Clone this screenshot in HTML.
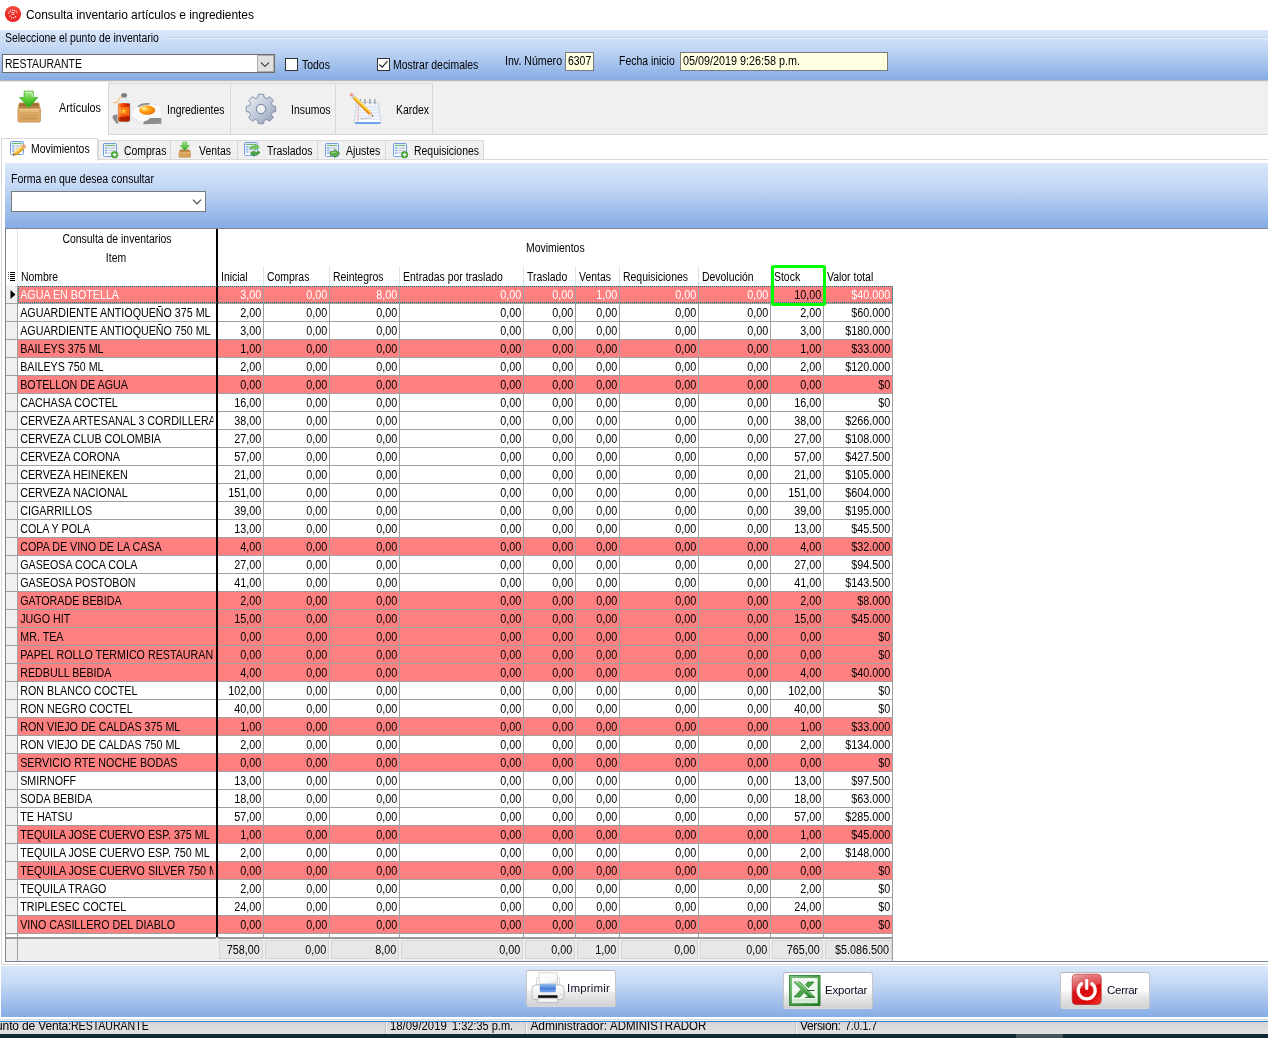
<!DOCTYPE html>
<html><head><meta charset="utf-8"><title>Consulta inventario</title>
<style>
*{box-sizing:border-box;margin:0;padding:0}
html,body{width:1268px;height:1038px;overflow:hidden;background:#fff}
body{position:relative;font-family:"Liberation Sans",sans-serif;font-size:12px;color:#000;line-height:14px}
.a{position:absolute}
.t{position:absolute;white-space:nowrap;transform:scaleX(.87);transform-origin:0 50%}
.g{position:absolute;white-space:nowrap}
.grad{background:linear-gradient(#d9e7fa,#c4d8f5 35%,#86ace4)}
.r{position:absolute;left:18px;width:875px;height:18px}
.red{background:#ff8080}
.c{position:absolute;top:0;height:17px;line-height:18px;text-align:right;white-space:nowrap;padding-right:2px;transform:scaleX(.9);transform-origin:100% 50%}
.n{position:absolute;top:0;left:0;width:219px;height:17px;line-height:18px;white-space:nowrap;overflow:hidden;padding-left:2.500px;transform:scaleX(.892);transform-origin:0 50%}
.sel{color:#fff}
.h{position:absolute;top:270px;height:14px;white-space:nowrap;transform:scaleX(.87);transform-origin:0 50%}
.vl{position:absolute;width:1px;background:#a0a0a0}
.hl{position:absolute;height:1px;background:#a0a0a0}
.tc{position:absolute;top:940px;height:19px;line-height:18px;text-align:right;background:#e6e8e8;border:1px solid #d4d6d6;padding-right:2px;white-space:nowrap}
.tc span{display:inline-block;transform:scaleX(.9);transform-origin:100% 50%}
</style></head><body><div id="all" style="position:absolute;left:0;top:0;width:1268px;height:1038px;will-change:transform">

<div class="a" style="left:0;top:0;width:1268px;height:30px;background:#fff"></div>
<svg class="a" style="left:4px;top:5px" width="18" height="18" viewBox="4 5 18 18"><defs><linearGradient id="tIc" x1="0" y1="0" x2="0" y2="1"><stop offset="0" stop-color="#f2503e"/><stop offset=".5" stop-color="#ee2c26"/><stop offset="1" stop-color="#ec2424"/></linearGradient></defs><circle cx="13" cy="14" r="8.100" fill="url(#tIc)"/><path d="M8.600 14.800 A4.600 4.600 0 0 1 17.400 14.800" fill="none" stroke="#fff" stroke-width="1.300" stroke-dasharray="1.100 1.150" transform="translate(0 -1.300)"/><path d="M11.700 12.600 h2.700 M11.700 14.300 h2.700" stroke="#ffe3e0" stroke-width="1"/><path d="M9.900 15.600 A3.200 3.200 0 0 0 16.100 15.600" fill="none" stroke="#fff" stroke-width="1.300" stroke-dasharray="1.100 1.100"/></svg>
<div class="g" style="left:26px;top:7px;font-size:12px;line-height:16px;letter-spacing:-0.05px">Consulta inventario artículos e ingredientes</div>
<div class="a grad" style="left:0;top:30px;width:1268px;height:50px"></div>
<div class="a" style="left:0;top:80px;width:1268px;height:1px;background:#b4bac6"></div>
<div class="a" style="left:0;top:81px;width:1268px;height:1px;background:#e4e4e4;z-index:1"></div>
<div class="a" style="left:0;top:37px;width:4px;height:1px;background:#c8cfd8"></div>
<div class="a" style="left:165px;top:37px;width:1103px;height:1px;background:#c8cfd8"></div>
<div class="a" style="left:165px;top:38px;width:1103px;height:1px;background:#e6eefb"></div>
<div class="t" style="left:5px;top:31px">Seleccione el punto de inventario</div>
<div class="a" style="left:2px;top:54px;width:273px;height:19px;background:#fff;border:1px solid #6d6d6d"></div>
<div class="t" style="left:5px;top:57px">RESTAURANTE</div>
<div class="a" style="left:257px;top:55px;width:17px;height:17px;background:#e1e1e1;border:1px solid #adadad"></div>
<svg class="a" style="left:260px;top:61px" width="11" height="7" viewBox="0 0 11 7"><path d="M1 1.500 L5 5.500 L9 1.500" fill="none" stroke="#444" stroke-width="1.1"/></svg>
<div class="a" style="left:285px;top:58px;width:13px;height:13px;background:#fff;border:1px solid #333"></div>
<div class="t" style="left:302px;top:58px">Todos</div>
<div class="a" style="left:377px;top:58px;width:13px;height:13px;background:#fff;border:1px solid #333"></div>
<svg class="a" style="left:378px;top:59px" width="11" height="11" viewBox="0 0 11 11"><path d="M1.5 5.5 L4.2 8.2 L9.5 2.2" fill="none" stroke="#222" stroke-width="1.2"/></svg>
<div class="t" style="left:393px;top:58px">Mostrar decimales</div>
<div class="t" style="left:505px;top:54px;transform:scaleX(.885)">Inv. Número</div>
<div class="a" style="left:565px;top:52px;width:29px;height:19px;background:#ffffe1;border:1px solid #7a7a7a"></div>
<div class="t" style="left:568px;top:54px">6307</div>
<div class="t" style="left:619px;top:54px">Fecha inicio</div>
<div class="a" style="left:680px;top:52px;width:208px;height:19px;background:#ffffe1;border:1px solid #7a7a7a"></div>
<div class="t" style="left:683px;top:54px;transform:scaleX(.9)">05/09/2019 9:26:58 p.m.</div>
<div class="a" style="left:0;top:81px;width:1268px;height:54px;background:#f0f0f0"></div>
<div class="a" style="left:0;top:134px;width:1268px;height:1px;background:#d9d9d9"></div>
<div class="a" style="left:0;top:81px;width:108px;height:54px;background:#fff"></div>
<div class="a" style="left:108px;top:83px;width:123px;height:52px;border:1px solid #d9d9d9"></div>
<div class="a" style="left:230px;top:83px;width:106px;height:52px;border:1px solid #d9d9d9"></div>
<div class="a" style="left:335px;top:83px;width:98px;height:52px;border:1px solid #d9d9d9"></div>
<div class="t" style="left:59px;top:101px;transform:scaleX(.9)">Artículos</div>
<div class="t" style="left:167px;top:103px">Ingredientes</div>
<div class="t" style="left:291px;top:103px">Insumos</div>
<div class="t" style="left:396px;top:103px">Kardex</div>
<svg class="a" style="left:0;top:81px" width="440" height="54" viewBox="0 81 440 54">
<defs>
<linearGradient id="gArrow" x1="0" y1="0" x2="0" y2="1"><stop offset="0" stop-color="#b7ee9f"/><stop offset=".45" stop-color="#5fd23c"/><stop offset="1" stop-color="#2aa514"/></linearGradient>
<linearGradient id="gBox" x1="0" y1="0" x2="0" y2="1"><stop offset="0" stop-color="#e9bb7b"/><stop offset="1" stop-color="#d39b52"/></linearGradient>
<linearGradient id="gBoxIn" x1="0" y1="0" x2="0" y2="1"><stop offset="0" stop-color="#8f5f2b"/><stop offset="1" stop-color="#c4934f"/></linearGradient>
<linearGradient id="gGear" x1="0" y1="0" x2="1" y2="1"><stop offset="0" stop-color="#eef1f6"/><stop offset=".5" stop-color="#c3ccdb"/><stop offset="1" stop-color="#8f9cb6"/></linearGradient>
<linearGradient id="gBot" x1="0" y1="0" x2="1" y2="0"><stop offset="0" stop-color="#ff7a1a"/><stop offset=".5" stop-color="#ea3a06"/><stop offset="1" stop-color="#b01c00"/></linearGradient>
<radialGradient id="gYolk" cx=".35" cy=".35" r=".8"><stop offset="0" stop-color="#ffe15a"/><stop offset=".45" stop-color="#ff9a10"/><stop offset="1" stop-color="#e86a00"/></radialGradient>
<linearGradient id="gPen" x1="0" y1="0" x2="1" y2="0"><stop offset="0" stop-color="#ffd23a"/><stop offset="1" stop-color="#f09a00"/></linearGradient>
<linearGradient id="gPad" x1="0" y1="0" x2="0" y2="1"><stop offset="0" stop-color="#f0f4fb"/><stop offset="1" stop-color="#ffffff"/></linearGradient>
</defs>
<!-- Articulos: box + arrow -->
<g>
<path d="M19.300 102.900 L38.900 102.900 L40.300 109 L17.900 109 Z" fill="url(#gBoxIn)" stroke="#d9aa68" stroke-width=".9" stroke-linejoin="round"/>
<rect x="18" y="108.600" width="22.300" height="13.400" rx="1" fill="#e4b06b" stroke="#bd8a4a" stroke-width=".9"/>
<rect x="19.800" y="110.600" width="18.700" height="9.800" fill="url(#gBox)"/>
<path d="M19.800 113h18.700M19.800 115.500h18.700M19.800 118h18.700" stroke="#c48e4b" stroke-width=".7"/>
<path d="M18.600 109.300h21" stroke="#f5d8a8" stroke-width=".9"/>
<path d="M24.200 91.200 h9 v6.400 h4.600 l-9.100 10 l-8.900 -10 h4.400 z" fill="url(#gArrow)" stroke="#3fb522" stroke-width=".9" stroke-linejoin="round"/>
<path d="M25.200 92.200 h7 v5" stroke="#e2fbd6" stroke-width=".9" fill="none" opacity=".85"/>
<path d="M28.700 106.200 l7.400 -8" stroke="#1f9410" stroke-width=".9" opacity=".6"/>
</g>
<!-- Ingredientes: bottle + egg -->
<g>
<path d="M113 115.500 l5 -1.500 l1 8 l-2 2.200 l-4.500 -6.200z" fill="#8a8a8a"/>
<path d="M131.600 114 Q132 108 139 105 Q146 102.600 158 105 Q161.300 106 161.300 110 L161.300 118.500 L150 118.500 Q146 123.600 140 123.600 Q132 123 131.600 114 Z" fill="#fbfbfb" stroke="#dcdcdc" stroke-width=".6"/>
<path d="M137.500 106.700 Q139.500 103.200 147 103 L150.300 103.300 L148 105.700 Q142 105 138.800 107.500 Z" fill="#8e8e8e"/>
<path d="M143.500 121.400 Q148 121 150 118 L161.300 118 L161.300 123.800 L143.500 124.200 Z" fill="#8d8d8d"/>
<path d="M134 117 q2 4.800 8 5.200" fill="none" stroke="#e2e2e2" stroke-width="1.200"/>
<path d="M133.500 112 l.5 .5 M136 119 l.5 .5 M139 116.500 l.5 .5 M141 120.500 l.5 .3 M137 113.500 l.5 .5" stroke="#d0d0d0" stroke-width=".7"/>
<ellipse cx="147.200" cy="110.200" rx="9" ry="5.500" fill="#ffffff" opacity=".9"/>
<ellipse cx="147.200" cy="110.200" rx="8.100" ry="4.600" fill="url(#gYolk)"/>
<ellipse cx="144" cy="108.600" rx="2.200" ry="1" fill="#fff4b8" opacity=".85"/>
<path d="M121.600 97 h5 v3.500 q3.700 1.200 3.900 4 v15.700 q0 2 -2 2.200 h-8.800 q-2 -.2 -2 -2.200 v-15.700 q.2 -2.800 3.900 -4z" fill="#e6f0f3" stroke="#c9d8dc" stroke-width=".7"/>
<path d="M118.200 103.600 q5.800 -1.400 11.600 0 v15.900 q0 1.800 -1.800 2 h-8 q-1.800 -.2 -1.800 -2z" fill="url(#gBot)"/>
<path d="M118.200 117 h11.600 v2.500 q0 1.800 -1.800 2 h-8 q-1.800 -.2 -1.800 -2z" fill="#a81c00" opacity=".8"/>
<rect x="118.800" y="106.800" width="10.400" height="8.800" fill="#f66c12"/>
<path d="M123.800 107.800 l1 2.100 l2.200 .2 l-1.700 1.500 l.5 2.200 l-2 -1.200 l-2 1.200 l.5 -2.200 l-1.700 -1.500 l2.200 -.2z" fill="#ffc12e"/>
<path d="M120 107.500 v6.500" stroke="#ffd9a0" stroke-width=".9"/>
<path d="M119.200 104.500 v15.500" stroke="#ff9a50" stroke-width=".7" opacity=".7"/>
<rect x="121.200" y="93.300" width="5.800" height="4.100" rx="1.800" fill="#7b7b7b"/>
<path d="M121.500 96.500 q-3.500 2 -3.500 5 q-1.500 1.600 -4.600 1.200" fill="none" stroke="#f2b13e" stroke-width="1"/>
</g>
<!-- Insumos: gear -->
<g transform="translate(261 109)">
<path id="gearp" fill="url(#gGear)" stroke="#7b88a6" stroke-width=".9" stroke-linejoin="round" d="M-2.600 -14.700 L2.600 -14.700 L3.300 -11.400 L5.700 -10.400 L8.600 -12.300 L12.300 -8.600 L10.400 -5.700 L11.400 -3.300 L14.700 -2.600 L14.700 2.600 L11.400 3.300 L10.400 5.700 L12.300 8.600 L8.600 12.300 L5.700 10.400 L3.300 11.400 L2.600 14.700 L-2.600 14.700 L-3.300 11.400 L-5.700 10.400 L-8.600 12.300 L-12.300 8.600 L-10.400 5.700 L-11.400 3.300 L-14.700 2.600 L-14.700 -2.600 L-11.400 -3.300 L-10.400 -5.700 L-12.300 -8.600 L-8.600 -12.300 L-5.700 -10.400 L-3.300 -11.400 Z"/>
<circle cx="0" cy="0" r="4.700" fill="#f0f0f0" stroke="#6f7c9c" stroke-width="1"/>
</g>
<!-- Kardex: notepad + pencil -->
<g>
<path d="M356.600 102.400 h21.600 l2.600 20 q0 1.300 -1.400 1.300 h-23.800 q-1.300 0 -1.200 -1.300z" fill="url(#gPad)" stroke="#b9c8e2" stroke-width=".8"/>
<path d="M355 122.300 h25.600 v.6 q0 .8 -1 .8 h-23.800 q-.9 0 -.8 -.8z" fill="#3f8fe0"/>
<path d="M357 107h21.500M356.800 110h22M356.600 113h22.500M356.300 116h23M356 119h23.600" stroke="#c9cdee" stroke-width=".7"/>
<path d="M358.600 103 l-.9 19" stroke="#f0a0a0" stroke-width=".8"/>
<path d="M360.300 99.500 v4M365 99.500 v4M369.900 99.500 v4M374.800 99.500 v4" stroke="#a9adb5" stroke-width="1.700" stroke-linecap="round"/>
<path d="M360 118.300 q5 1 11 -.8" stroke="#c8c8c8" stroke-width="1.200" fill="none"/>
<g transform="translate(350.600 93.800) rotate(45.200)">
<rect x="0" y="-1.700" width="2.600" height="3.400" rx="1.200" fill="#f08a7a"/>
<rect x="2.600" y="-1.700" width="2.400" height="3.400" fill="#c9c9c9"/>
<rect x="5" y="-1.700" width="22.500" height="3.400" fill="url(#gPen)"/>
<rect x="5" y="-1.700" width="22.500" height="1.200" fill="#ffe27a"/>
<rect x="5" y=".7" width="22.500" height="1" fill="#e08600"/>
<path d="M27.500 -1.700 L32.300 0 L27.500 1.700Z" fill="#e9b98a"/>
<path d="M30.600 -.6 L32.600 0 L30.600 .6Z" fill="#444"/>
</g>
</g>
</svg>

<div class="a" style="left:0;top:135px;width:1268px;height:28px;background:#fff"></div>
<div class="a" style="left:1px;top:159px;width:1267px;height:1px;background:#d9d9d9"></div>
<div class="a" style="left:98px;top:140px;width:73px;height:20px;background:#f0f0f0;border:1px solid #d9d9d9"></div>
<div class="t" style="left:124px;top:144px">Compras</div>
<div class="a" style="left:170px;top:140px;width:68px;height:20px;background:#f0f0f0;border:1px solid #d9d9d9"></div>
<div class="t" style="left:199px;top:144px">Ventas</div>
<div class="a" style="left:237px;top:140px;width:81px;height:20px;background:#f0f0f0;border:1px solid #d9d9d9"></div>
<div class="t" style="left:267px;top:144px">Traslados</div>
<div class="a" style="left:317px;top:140px;width:69px;height:20px;background:#f0f0f0;border:1px solid #d9d9d9"></div>
<div class="t" style="left:346px;top:144px">Ajustes</div>
<div class="a" style="left:385px;top:140px;width:99px;height:20px;background:#f0f0f0;border:1px solid #d9d9d9"></div>
<div class="t" style="left:414px;top:144px">Requisiciones</div>
<div class="a" style="left:1px;top:138px;width:97px;height:23px;background:#fff;border:1px solid #d9d9d9;border-bottom:none"></div>
<div class="t" style="left:31px;top:142px">Movimientos</div>
<svg class="a" style="left:0;top:136px" width="500" height="28" viewBox="0 136 500 28">
<defs>
<linearGradient id="sTab" x1="0" y1="0" x2="0" y2="1"><stop offset="0" stop-color="#dfe9f8"/><stop offset="1" stop-color="#ffffff"/></linearGradient>
<linearGradient id="sArr" x1="0" y1="0" x2="0" y2="1"><stop offset="0" stop-color="#a5e58a"/><stop offset="1" stop-color="#2da318"/></linearGradient>
<linearGradient id="sBox" x1="0" y1="0" x2="0" y2="1"><stop offset="0" stop-color="#e9bb7b"/><stop offset="1" stop-color="#d39b52"/></linearGradient>
<g id="tbl">
<rect x=".5" y=".5" width="13" height="13" rx="1" fill="url(#sTab)" stroke="#6f9be0" stroke-width="1"/>
<path d="M2 2.500h10" stroke="#6cc06a" stroke-width="1"/>
<path d="M2 5h2.500M2 7.500h2.500M2 10h2.500" stroke="#8fb2e8" stroke-width="1.300"/>
<path d="M5.500 5h6.500M5.500 7.500h6.500M5.500 10h6.500" stroke="#c9cfdb" stroke-width="1.300"/>
</g>
<g id="plus">
<circle cx="0" cy="0" r="3.300" fill="#4fae3a" stroke="#2d8a20" stroke-width=".6"/>
<path d="M-1.800 0h3.600M0 -1.800v3.600" stroke="#fff" stroke-width="1.300"/>
</g>
</defs>
<!-- Movimientos -->
<use href="#tbl" x="10" y="141"/>
<g transform="translate(12.800 155.600) rotate(-40)">
<path d="M0 0 L3.200 -2.200 L3.200 2.200Z" fill="#c27c45"/>
<path d="M0 0 L1.200 -.8 L1.200 .8Z" fill="#5a3a20"/>
<rect x="3.200" y="-2.300" width="9.300" height="4.600" fill="#f6c33c"/>
<rect x="3.200" y="-2.300" width="9.300" height="1.500" fill="#ffe9a0"/>
<rect x="3.200" y="1" width="9.300" height="1.300" fill="#e09a1a"/>
<rect x="12.500" y="-2.300" width="1.500" height="4.600" fill="#e0b070"/>
<rect x="14" y="-2.300" width="2" height="4.600" rx="1" fill="#f0a070"/>
</g>
<!-- Compras -->
<use href="#tbl" x="103" y="143"/>
<use href="#plus" x="114.600" y="154.700"/>
<!-- Ventas: box + arrow -->
<path d="M180 149.500 h9.500 l1 2.500 h-11.500z" fill="#b48246"/>
<rect x="179" y="151.800" width="11.500" height="5.400" rx=".6" fill="url(#sBox)" stroke="#c48f4c" stroke-width=".6"/>
<path d="M179.500 154.500h10.500" stroke="#c99350" stroke-width=".6"/>
<path d="M182.700 142.200 h4.200 v3.300 h2.400 l-4.500 5 l-4.500 -5 h2.400z" fill="url(#sArr)" stroke="#3fb522" stroke-width=".6"/>
<!-- Traslados -->
<use href="#tbl" x="244" y="142"/>
<path d="M249.400 148.300 q1.800 -3 6 -2.300 l0 -1.700 l4 2.900 l-4 2.900 l0 -1.700 q-2.800 -.5 -4.200 1z" fill="#79cc68" stroke="#3e9a30" stroke-width=".5"/>
<path d="M260.200 152.400 q-1.800 3 -6 2.300 l0 1.700 l-4 -2.900 l4 -2.900 l0 1.700 q2.800 .5 4.200 -1z" fill="#47a837" stroke="#2b7d1d" stroke-width=".5"/>
<!-- Ajustes -->
<use href="#tbl" x="325" y="143"/>
<path d="M330.300 151.700 h4.400 v-2.300 l5 4.100 l-5 4.100 v-2.300 h-4.400z" fill="#5db548" stroke="#2d7f1f" stroke-width=".8" stroke-linejoin="round"/>
<path d="M331 152.500 h4.300 v-1.400" fill="none" stroke="#a8e096" stroke-width=".7"/>
<!-- Requisiciones -->
<use href="#tbl" x="393" y="143"/>
<use href="#plus" x="404.600" y="154.700"/>
</svg>

<div class="a" style="left:1px;top:160px;width:1px;height:805px;background:#d9d9d9"></div>
<div class="a grad" style="left:5px;top:163px;width:1263px;height:65px"></div>
<div class="t" style="left:11px;top:172px;transform:scaleX(.878)">Forma en que desea consultar</div>
<div class="a" style="left:11px;top:191px;width:195px;height:21px;background:#fff;border:1px solid #7a7a7a"></div>
<svg class="a" style="left:192px;top:198px" width="10" height="8" viewBox="0 0 10 8"><path d="M1 1.700 L5 5.900 L9 1.700" fill="none" stroke="#444" stroke-width="1.1"/></svg>
<div class="a" style="left:5px;top:228px;width:1263px;height:734px;background:#fff"></div>
<div class="a" style="left:5px;top:228px;width:1263px;height:1px;background:#7f8794"></div>
<div class="a" style="left:5px;top:228px;width:1px;height:734px;background:#7f8794"></div>
<div class="a" style="left:6px;top:229px;width:11px;height:706px;background:#f0f0f0"></div>
<div class="a" style="left:6px;top:229px;width:11px;height:57px;background:#fff"></div>
<div class="a" style="left:17px;top:229px;width:1px;height:57px;background:#e3e3e3"></div>
<div class="a" style="left:17px;top:286px;width:1px;height:651px;background:#a0a0a0"></div>
<div class="t" style="left:18px;top:232px;width:198px;text-align:center;transform-origin:50% 50%">Consulta de inventarios</div>
<div class="t" style="left:18px;top:251px;width:196px;text-align:center;transform-origin:50% 50%">Item</div>
<div class="t" style="left:526px;top:241px">Movimientos</div>
<div class="h" style="left:21px">Nombre</div>
<div class="h" style="left:221px">Inicial</div>
<div class="h" style="left:267px">Compras</div>
<div class="h" style="left:333px">Reintegros</div>
<div class="h" style="left:403px">Entradas por traslado</div>
<div class="h" style="left:527px">Traslado</div>
<div class="h" style="left:579px">Ventas</div>
<div class="h" style="left:623px">Requisiciones</div>
<div class="h" style="left:702px">Devolución</div>
<div class="h" style="left:774px">Stock</div>
<div class="h" style="left:827px">Valor total</div>
<div class="vl" style="left:263px;top:266px;height:20px;background:#e3e3e3"></div>
<div class="vl" style="left:329px;top:266px;height:20px;background:#e3e3e3"></div>
<div class="vl" style="left:399px;top:266px;height:20px;background:#e3e3e3"></div>
<div class="vl" style="left:523px;top:266px;height:20px;background:#e3e3e3"></div>
<div class="vl" style="left:575px;top:266px;height:20px;background:#e3e3e3"></div>
<div class="vl" style="left:619px;top:266px;height:20px;background:#e3e3e3"></div>
<div class="vl" style="left:698px;top:266px;height:20px;background:#e3e3e3"></div>
<div class="vl" style="left:770px;top:266px;height:20px;background:#e3e3e3"></div>
<div class="vl" style="left:823px;top:266px;height:20px;background:#e3e3e3"></div>
<svg class="a" style="left:8px;top:272px" width="8" height="9" viewBox="0 0 8 9"><path d="M2 0.5h5M2 2.5h5M2 4.5h5M2 6.5h5M2 8.5h5" stroke="#000" stroke-width="1"/><path d="M0 0.5h1M0 2.5h1M0 4.5h1M0 6.5h1" stroke="#000" stroke-width="1" opacity=".55"/></svg>
<div class="r red" style="top:286px"><div class="n sel">AGUA EN BOTELLA</div><div class="c sel" style="left:200px;width:45px">3,00</div><div class="c sel" style="left:246px;width:65px">0,00</div><div class="c sel" style="left:312px;width:69px">8,00</div><div class="c sel" style="left:382px;width:123px">0,00</div><div class="c sel" style="left:506px;width:51px">0,00</div><div class="c sel" style="left:558px;width:43px">1,00</div><div class="c sel" style="left:602px;width:78px">0,00</div><div class="c sel" style="left:681px;width:71px">0,00</div><div class="c" style="left:753px;width:52px">10,00</div><div class="c sel" style="left:806px;width:68px">$40.000</div></div>
<div class="r" style="top:304px"><div class="n">AGUARDIENTE ANTIOQUEÑO 375 ML</div><div class="c" style="left:200px;width:45px">2,00</div><div class="c" style="left:246px;width:65px">0,00</div><div class="c" style="left:312px;width:69px">0,00</div><div class="c" style="left:382px;width:123px">0,00</div><div class="c" style="left:506px;width:51px">0,00</div><div class="c" style="left:558px;width:43px">0,00</div><div class="c" style="left:602px;width:78px">0,00</div><div class="c" style="left:681px;width:71px">0,00</div><div class="c" style="left:753px;width:52px">2,00</div><div class="c" style="left:806px;width:68px">$60.000</div></div>
<div class="r" style="top:322px"><div class="n">AGUARDIENTE ANTIOQUEÑO 750 ML</div><div class="c" style="left:200px;width:45px">3,00</div><div class="c" style="left:246px;width:65px">0,00</div><div class="c" style="left:312px;width:69px">0,00</div><div class="c" style="left:382px;width:123px">0,00</div><div class="c" style="left:506px;width:51px">0,00</div><div class="c" style="left:558px;width:43px">0,00</div><div class="c" style="left:602px;width:78px">0,00</div><div class="c" style="left:681px;width:71px">0,00</div><div class="c" style="left:753px;width:52px">3,00</div><div class="c" style="left:806px;width:68px">$180.000</div></div>
<div class="r red" style="top:340px"><div class="n">BAILEYS 375 ML</div><div class="c" style="left:200px;width:45px">1,00</div><div class="c" style="left:246px;width:65px">0,00</div><div class="c" style="left:312px;width:69px">0,00</div><div class="c" style="left:382px;width:123px">0,00</div><div class="c" style="left:506px;width:51px">0,00</div><div class="c" style="left:558px;width:43px">0,00</div><div class="c" style="left:602px;width:78px">0,00</div><div class="c" style="left:681px;width:71px">0,00</div><div class="c" style="left:753px;width:52px">1,00</div><div class="c" style="left:806px;width:68px">$33.000</div></div>
<div class="r" style="top:358px"><div class="n">BAILEYS 750 ML</div><div class="c" style="left:200px;width:45px">2,00</div><div class="c" style="left:246px;width:65px">0,00</div><div class="c" style="left:312px;width:69px">0,00</div><div class="c" style="left:382px;width:123px">0,00</div><div class="c" style="left:506px;width:51px">0,00</div><div class="c" style="left:558px;width:43px">0,00</div><div class="c" style="left:602px;width:78px">0,00</div><div class="c" style="left:681px;width:71px">0,00</div><div class="c" style="left:753px;width:52px">2,00</div><div class="c" style="left:806px;width:68px">$120.000</div></div>
<div class="r red" style="top:376px"><div class="n">BOTELLON DE AGUA</div><div class="c" style="left:200px;width:45px">0,00</div><div class="c" style="left:246px;width:65px">0,00</div><div class="c" style="left:312px;width:69px">0,00</div><div class="c" style="left:382px;width:123px">0,00</div><div class="c" style="left:506px;width:51px">0,00</div><div class="c" style="left:558px;width:43px">0,00</div><div class="c" style="left:602px;width:78px">0,00</div><div class="c" style="left:681px;width:71px">0,00</div><div class="c" style="left:753px;width:52px">0,00</div><div class="c" style="left:806px;width:68px">$0</div></div>
<div class="r" style="top:394px"><div class="n">CACHASA COCTEL</div><div class="c" style="left:200px;width:45px">16,00</div><div class="c" style="left:246px;width:65px">0,00</div><div class="c" style="left:312px;width:69px">0,00</div><div class="c" style="left:382px;width:123px">0,00</div><div class="c" style="left:506px;width:51px">0,00</div><div class="c" style="left:558px;width:43px">0,00</div><div class="c" style="left:602px;width:78px">0,00</div><div class="c" style="left:681px;width:71px">0,00</div><div class="c" style="left:753px;width:52px">16,00</div><div class="c" style="left:806px;width:68px">$0</div></div>
<div class="r" style="top:412px"><div class="n">CERVEZA ARTESANAL 3 CORDILLERAS</div><div class="c" style="left:200px;width:45px">38,00</div><div class="c" style="left:246px;width:65px">0,00</div><div class="c" style="left:312px;width:69px">0,00</div><div class="c" style="left:382px;width:123px">0,00</div><div class="c" style="left:506px;width:51px">0,00</div><div class="c" style="left:558px;width:43px">0,00</div><div class="c" style="left:602px;width:78px">0,00</div><div class="c" style="left:681px;width:71px">0,00</div><div class="c" style="left:753px;width:52px">38,00</div><div class="c" style="left:806px;width:68px">$266.000</div></div>
<div class="r" style="top:430px"><div class="n">CERVEZA CLUB COLOMBIA</div><div class="c" style="left:200px;width:45px">27,00</div><div class="c" style="left:246px;width:65px">0,00</div><div class="c" style="left:312px;width:69px">0,00</div><div class="c" style="left:382px;width:123px">0,00</div><div class="c" style="left:506px;width:51px">0,00</div><div class="c" style="left:558px;width:43px">0,00</div><div class="c" style="left:602px;width:78px">0,00</div><div class="c" style="left:681px;width:71px">0,00</div><div class="c" style="left:753px;width:52px">27,00</div><div class="c" style="left:806px;width:68px">$108.000</div></div>
<div class="r" style="top:448px"><div class="n">CERVEZA CORONA</div><div class="c" style="left:200px;width:45px">57,00</div><div class="c" style="left:246px;width:65px">0,00</div><div class="c" style="left:312px;width:69px">0,00</div><div class="c" style="left:382px;width:123px">0,00</div><div class="c" style="left:506px;width:51px">0,00</div><div class="c" style="left:558px;width:43px">0,00</div><div class="c" style="left:602px;width:78px">0,00</div><div class="c" style="left:681px;width:71px">0,00</div><div class="c" style="left:753px;width:52px">57,00</div><div class="c" style="left:806px;width:68px">$427.500</div></div>
<div class="r" style="top:466px"><div class="n">CERVEZA HEINEKEN</div><div class="c" style="left:200px;width:45px">21,00</div><div class="c" style="left:246px;width:65px">0,00</div><div class="c" style="left:312px;width:69px">0,00</div><div class="c" style="left:382px;width:123px">0,00</div><div class="c" style="left:506px;width:51px">0,00</div><div class="c" style="left:558px;width:43px">0,00</div><div class="c" style="left:602px;width:78px">0,00</div><div class="c" style="left:681px;width:71px">0,00</div><div class="c" style="left:753px;width:52px">21,00</div><div class="c" style="left:806px;width:68px">$105.000</div></div>
<div class="r" style="top:484px"><div class="n">CERVEZA NACIONAL</div><div class="c" style="left:200px;width:45px">151,00</div><div class="c" style="left:246px;width:65px">0,00</div><div class="c" style="left:312px;width:69px">0,00</div><div class="c" style="left:382px;width:123px">0,00</div><div class="c" style="left:506px;width:51px">0,00</div><div class="c" style="left:558px;width:43px">0,00</div><div class="c" style="left:602px;width:78px">0,00</div><div class="c" style="left:681px;width:71px">0,00</div><div class="c" style="left:753px;width:52px">151,00</div><div class="c" style="left:806px;width:68px">$604.000</div></div>
<div class="r" style="top:502px"><div class="n">CIGARRILLOS</div><div class="c" style="left:200px;width:45px">39,00</div><div class="c" style="left:246px;width:65px">0,00</div><div class="c" style="left:312px;width:69px">0,00</div><div class="c" style="left:382px;width:123px">0,00</div><div class="c" style="left:506px;width:51px">0,00</div><div class="c" style="left:558px;width:43px">0,00</div><div class="c" style="left:602px;width:78px">0,00</div><div class="c" style="left:681px;width:71px">0,00</div><div class="c" style="left:753px;width:52px">39,00</div><div class="c" style="left:806px;width:68px">$195.000</div></div>
<div class="r" style="top:520px"><div class="n">COLA Y POLA</div><div class="c" style="left:200px;width:45px">13,00</div><div class="c" style="left:246px;width:65px">0,00</div><div class="c" style="left:312px;width:69px">0,00</div><div class="c" style="left:382px;width:123px">0,00</div><div class="c" style="left:506px;width:51px">0,00</div><div class="c" style="left:558px;width:43px">0,00</div><div class="c" style="left:602px;width:78px">0,00</div><div class="c" style="left:681px;width:71px">0,00</div><div class="c" style="left:753px;width:52px">13,00</div><div class="c" style="left:806px;width:68px">$45.500</div></div>
<div class="r red" style="top:538px"><div class="n">COPA DE VINO DE LA CASA</div><div class="c" style="left:200px;width:45px">4,00</div><div class="c" style="left:246px;width:65px">0,00</div><div class="c" style="left:312px;width:69px">0,00</div><div class="c" style="left:382px;width:123px">0,00</div><div class="c" style="left:506px;width:51px">0,00</div><div class="c" style="left:558px;width:43px">0,00</div><div class="c" style="left:602px;width:78px">0,00</div><div class="c" style="left:681px;width:71px">0,00</div><div class="c" style="left:753px;width:52px">4,00</div><div class="c" style="left:806px;width:68px">$32.000</div></div>
<div class="r" style="top:556px"><div class="n">GASEOSA COCA COLA</div><div class="c" style="left:200px;width:45px">27,00</div><div class="c" style="left:246px;width:65px">0,00</div><div class="c" style="left:312px;width:69px">0,00</div><div class="c" style="left:382px;width:123px">0,00</div><div class="c" style="left:506px;width:51px">0,00</div><div class="c" style="left:558px;width:43px">0,00</div><div class="c" style="left:602px;width:78px">0,00</div><div class="c" style="left:681px;width:71px">0,00</div><div class="c" style="left:753px;width:52px">27,00</div><div class="c" style="left:806px;width:68px">$94.500</div></div>
<div class="r" style="top:574px"><div class="n">GASEOSA POSTOBON</div><div class="c" style="left:200px;width:45px">41,00</div><div class="c" style="left:246px;width:65px">0,00</div><div class="c" style="left:312px;width:69px">0,00</div><div class="c" style="left:382px;width:123px">0,00</div><div class="c" style="left:506px;width:51px">0,00</div><div class="c" style="left:558px;width:43px">0,00</div><div class="c" style="left:602px;width:78px">0,00</div><div class="c" style="left:681px;width:71px">0,00</div><div class="c" style="left:753px;width:52px">41,00</div><div class="c" style="left:806px;width:68px">$143.500</div></div>
<div class="r red" style="top:592px"><div class="n">GATORADE BEBIDA</div><div class="c" style="left:200px;width:45px">2,00</div><div class="c" style="left:246px;width:65px">0,00</div><div class="c" style="left:312px;width:69px">0,00</div><div class="c" style="left:382px;width:123px">0,00</div><div class="c" style="left:506px;width:51px">0,00</div><div class="c" style="left:558px;width:43px">0,00</div><div class="c" style="left:602px;width:78px">0,00</div><div class="c" style="left:681px;width:71px">0,00</div><div class="c" style="left:753px;width:52px">2,00</div><div class="c" style="left:806px;width:68px">$8.000</div></div>
<div class="r red" style="top:610px"><div class="n">JUGO HIT</div><div class="c" style="left:200px;width:45px">15,00</div><div class="c" style="left:246px;width:65px">0,00</div><div class="c" style="left:312px;width:69px">0,00</div><div class="c" style="left:382px;width:123px">0,00</div><div class="c" style="left:506px;width:51px">0,00</div><div class="c" style="left:558px;width:43px">0,00</div><div class="c" style="left:602px;width:78px">0,00</div><div class="c" style="left:681px;width:71px">0,00</div><div class="c" style="left:753px;width:52px">15,00</div><div class="c" style="left:806px;width:68px">$45.000</div></div>
<div class="r red" style="top:628px"><div class="n">MR. TEA</div><div class="c" style="left:200px;width:45px">0,00</div><div class="c" style="left:246px;width:65px">0,00</div><div class="c" style="left:312px;width:69px">0,00</div><div class="c" style="left:382px;width:123px">0,00</div><div class="c" style="left:506px;width:51px">0,00</div><div class="c" style="left:558px;width:43px">0,00</div><div class="c" style="left:602px;width:78px">0,00</div><div class="c" style="left:681px;width:71px">0,00</div><div class="c" style="left:753px;width:52px">0,00</div><div class="c" style="left:806px;width:68px">$0</div></div>
<div class="r red" style="top:646px"><div class="n">PAPEL ROLLO TERMICO RESTAURANTE</div><div class="c" style="left:200px;width:45px">0,00</div><div class="c" style="left:246px;width:65px">0,00</div><div class="c" style="left:312px;width:69px">0,00</div><div class="c" style="left:382px;width:123px">0,00</div><div class="c" style="left:506px;width:51px">0,00</div><div class="c" style="left:558px;width:43px">0,00</div><div class="c" style="left:602px;width:78px">0,00</div><div class="c" style="left:681px;width:71px">0,00</div><div class="c" style="left:753px;width:52px">0,00</div><div class="c" style="left:806px;width:68px">$0</div></div>
<div class="r red" style="top:664px"><div class="n">REDBULL BEBIDA</div><div class="c" style="left:200px;width:45px">4,00</div><div class="c" style="left:246px;width:65px">0,00</div><div class="c" style="left:312px;width:69px">0,00</div><div class="c" style="left:382px;width:123px">0,00</div><div class="c" style="left:506px;width:51px">0,00</div><div class="c" style="left:558px;width:43px">0,00</div><div class="c" style="left:602px;width:78px">0,00</div><div class="c" style="left:681px;width:71px">0,00</div><div class="c" style="left:753px;width:52px">4,00</div><div class="c" style="left:806px;width:68px">$40.000</div></div>
<div class="r" style="top:682px"><div class="n">RON BLANCO COCTEL</div><div class="c" style="left:200px;width:45px">102,00</div><div class="c" style="left:246px;width:65px">0,00</div><div class="c" style="left:312px;width:69px">0,00</div><div class="c" style="left:382px;width:123px">0,00</div><div class="c" style="left:506px;width:51px">0,00</div><div class="c" style="left:558px;width:43px">0,00</div><div class="c" style="left:602px;width:78px">0,00</div><div class="c" style="left:681px;width:71px">0,00</div><div class="c" style="left:753px;width:52px">102,00</div><div class="c" style="left:806px;width:68px">$0</div></div>
<div class="r" style="top:700px"><div class="n">RON NEGRO COCTEL</div><div class="c" style="left:200px;width:45px">40,00</div><div class="c" style="left:246px;width:65px">0,00</div><div class="c" style="left:312px;width:69px">0,00</div><div class="c" style="left:382px;width:123px">0,00</div><div class="c" style="left:506px;width:51px">0,00</div><div class="c" style="left:558px;width:43px">0,00</div><div class="c" style="left:602px;width:78px">0,00</div><div class="c" style="left:681px;width:71px">0,00</div><div class="c" style="left:753px;width:52px">40,00</div><div class="c" style="left:806px;width:68px">$0</div></div>
<div class="r red" style="top:718px"><div class="n">RON VIEJO DE CALDAS 375 ML</div><div class="c" style="left:200px;width:45px">1,00</div><div class="c" style="left:246px;width:65px">0,00</div><div class="c" style="left:312px;width:69px">0,00</div><div class="c" style="left:382px;width:123px">0,00</div><div class="c" style="left:506px;width:51px">0,00</div><div class="c" style="left:558px;width:43px">0,00</div><div class="c" style="left:602px;width:78px">0,00</div><div class="c" style="left:681px;width:71px">0,00</div><div class="c" style="left:753px;width:52px">1,00</div><div class="c" style="left:806px;width:68px">$33.000</div></div>
<div class="r" style="top:736px"><div class="n">RON VIEJO DE CALDAS 750 ML</div><div class="c" style="left:200px;width:45px">2,00</div><div class="c" style="left:246px;width:65px">0,00</div><div class="c" style="left:312px;width:69px">0,00</div><div class="c" style="left:382px;width:123px">0,00</div><div class="c" style="left:506px;width:51px">0,00</div><div class="c" style="left:558px;width:43px">0,00</div><div class="c" style="left:602px;width:78px">0,00</div><div class="c" style="left:681px;width:71px">0,00</div><div class="c" style="left:753px;width:52px">2,00</div><div class="c" style="left:806px;width:68px">$134.000</div></div>
<div class="r red" style="top:754px"><div class="n">SERVICIO RTE NOCHE BODAS</div><div class="c" style="left:200px;width:45px">0,00</div><div class="c" style="left:246px;width:65px">0,00</div><div class="c" style="left:312px;width:69px">0,00</div><div class="c" style="left:382px;width:123px">0,00</div><div class="c" style="left:506px;width:51px">0,00</div><div class="c" style="left:558px;width:43px">0,00</div><div class="c" style="left:602px;width:78px">0,00</div><div class="c" style="left:681px;width:71px">0,00</div><div class="c" style="left:753px;width:52px">0,00</div><div class="c" style="left:806px;width:68px">$0</div></div>
<div class="r" style="top:772px"><div class="n">SMIRNOFF</div><div class="c" style="left:200px;width:45px">13,00</div><div class="c" style="left:246px;width:65px">0,00</div><div class="c" style="left:312px;width:69px">0,00</div><div class="c" style="left:382px;width:123px">0,00</div><div class="c" style="left:506px;width:51px">0,00</div><div class="c" style="left:558px;width:43px">0,00</div><div class="c" style="left:602px;width:78px">0,00</div><div class="c" style="left:681px;width:71px">0,00</div><div class="c" style="left:753px;width:52px">13,00</div><div class="c" style="left:806px;width:68px">$97.500</div></div>
<div class="r" style="top:790px"><div class="n">SODA BEBIDA</div><div class="c" style="left:200px;width:45px">18,00</div><div class="c" style="left:246px;width:65px">0,00</div><div class="c" style="left:312px;width:69px">0,00</div><div class="c" style="left:382px;width:123px">0,00</div><div class="c" style="left:506px;width:51px">0,00</div><div class="c" style="left:558px;width:43px">0,00</div><div class="c" style="left:602px;width:78px">0,00</div><div class="c" style="left:681px;width:71px">0,00</div><div class="c" style="left:753px;width:52px">18,00</div><div class="c" style="left:806px;width:68px">$63.000</div></div>
<div class="r" style="top:808px"><div class="n">TE HATSU</div><div class="c" style="left:200px;width:45px">57,00</div><div class="c" style="left:246px;width:65px">0,00</div><div class="c" style="left:312px;width:69px">0,00</div><div class="c" style="left:382px;width:123px">0,00</div><div class="c" style="left:506px;width:51px">0,00</div><div class="c" style="left:558px;width:43px">0,00</div><div class="c" style="left:602px;width:78px">0,00</div><div class="c" style="left:681px;width:71px">0,00</div><div class="c" style="left:753px;width:52px">57,00</div><div class="c" style="left:806px;width:68px">$285.000</div></div>
<div class="r red" style="top:826px"><div class="n">TEQUILA JOSE CUERVO ESP. 375 ML</div><div class="c" style="left:200px;width:45px">1,00</div><div class="c" style="left:246px;width:65px">0,00</div><div class="c" style="left:312px;width:69px">0,00</div><div class="c" style="left:382px;width:123px">0,00</div><div class="c" style="left:506px;width:51px">0,00</div><div class="c" style="left:558px;width:43px">0,00</div><div class="c" style="left:602px;width:78px">0,00</div><div class="c" style="left:681px;width:71px">0,00</div><div class="c" style="left:753px;width:52px">1,00</div><div class="c" style="left:806px;width:68px">$45.000</div></div>
<div class="r" style="top:844px"><div class="n">TEQUILA JOSE CUERVO ESP. 750 ML</div><div class="c" style="left:200px;width:45px">2,00</div><div class="c" style="left:246px;width:65px">0,00</div><div class="c" style="left:312px;width:69px">0,00</div><div class="c" style="left:382px;width:123px">0,00</div><div class="c" style="left:506px;width:51px">0,00</div><div class="c" style="left:558px;width:43px">0,00</div><div class="c" style="left:602px;width:78px">0,00</div><div class="c" style="left:681px;width:71px">0,00</div><div class="c" style="left:753px;width:52px">2,00</div><div class="c" style="left:806px;width:68px">$148.000</div></div>
<div class="r red" style="top:862px"><div class="n">TEQUILA JOSE CUERVO SILVER 750 ML</div><div class="c" style="left:200px;width:45px">0,00</div><div class="c" style="left:246px;width:65px">0,00</div><div class="c" style="left:312px;width:69px">0,00</div><div class="c" style="left:382px;width:123px">0,00</div><div class="c" style="left:506px;width:51px">0,00</div><div class="c" style="left:558px;width:43px">0,00</div><div class="c" style="left:602px;width:78px">0,00</div><div class="c" style="left:681px;width:71px">0,00</div><div class="c" style="left:753px;width:52px">0,00</div><div class="c" style="left:806px;width:68px">$0</div></div>
<div class="r" style="top:880px"><div class="n">TEQUILA TRAGO</div><div class="c" style="left:200px;width:45px">2,00</div><div class="c" style="left:246px;width:65px">0,00</div><div class="c" style="left:312px;width:69px">0,00</div><div class="c" style="left:382px;width:123px">0,00</div><div class="c" style="left:506px;width:51px">0,00</div><div class="c" style="left:558px;width:43px">0,00</div><div class="c" style="left:602px;width:78px">0,00</div><div class="c" style="left:681px;width:71px">0,00</div><div class="c" style="left:753px;width:52px">2,00</div><div class="c" style="left:806px;width:68px">$0</div></div>
<div class="r" style="top:898px"><div class="n">TRIPLESEC COCTEL</div><div class="c" style="left:200px;width:45px">24,00</div><div class="c" style="left:246px;width:65px">0,00</div><div class="c" style="left:312px;width:69px">0,00</div><div class="c" style="left:382px;width:123px">0,00</div><div class="c" style="left:506px;width:51px">0,00</div><div class="c" style="left:558px;width:43px">0,00</div><div class="c" style="left:602px;width:78px">0,00</div><div class="c" style="left:681px;width:71px">0,00</div><div class="c" style="left:753px;width:52px">24,00</div><div class="c" style="left:806px;width:68px">$0</div></div>
<div class="r red" style="top:916px"><div class="n">VINO CASILLERO DEL DIABLO</div><div class="c" style="left:200px;width:45px">0,00</div><div class="c" style="left:246px;width:65px">0,00</div><div class="c" style="left:312px;width:69px">0,00</div><div class="c" style="left:382px;width:123px">0,00</div><div class="c" style="left:506px;width:51px">0,00</div><div class="c" style="left:558px;width:43px">0,00</div><div class="c" style="left:602px;width:78px">0,00</div><div class="c" style="left:681px;width:71px">0,00</div><div class="c" style="left:753px;width:52px">0,00</div><div class="c" style="left:806px;width:68px">$0</div></div>
<div class="hl" style="left:6px;top:303px;width:887px"></div>
<div class="hl" style="left:6px;top:321px;width:887px"></div>
<div class="hl" style="left:6px;top:339px;width:887px"></div>
<div class="hl" style="left:6px;top:357px;width:887px"></div>
<div class="hl" style="left:6px;top:375px;width:887px"></div>
<div class="hl" style="left:6px;top:393px;width:887px"></div>
<div class="hl" style="left:6px;top:411px;width:887px"></div>
<div class="hl" style="left:6px;top:429px;width:887px"></div>
<div class="hl" style="left:6px;top:447px;width:887px"></div>
<div class="hl" style="left:6px;top:465px;width:887px"></div>
<div class="hl" style="left:6px;top:483px;width:887px"></div>
<div class="hl" style="left:6px;top:501px;width:887px"></div>
<div class="hl" style="left:6px;top:519px;width:887px"></div>
<div class="hl" style="left:6px;top:537px;width:887px"></div>
<div class="hl" style="left:6px;top:555px;width:887px"></div>
<div class="hl" style="left:6px;top:573px;width:887px"></div>
<div class="hl" style="left:6px;top:591px;width:887px"></div>
<div class="hl" style="left:6px;top:609px;width:887px"></div>
<div class="hl" style="left:6px;top:627px;width:887px"></div>
<div class="hl" style="left:6px;top:645px;width:887px"></div>
<div class="hl" style="left:6px;top:663px;width:887px"></div>
<div class="hl" style="left:6px;top:681px;width:887px"></div>
<div class="hl" style="left:6px;top:699px;width:887px"></div>
<div class="hl" style="left:6px;top:717px;width:887px"></div>
<div class="hl" style="left:6px;top:735px;width:887px"></div>
<div class="hl" style="left:6px;top:753px;width:887px"></div>
<div class="hl" style="left:6px;top:771px;width:887px"></div>
<div class="hl" style="left:6px;top:789px;width:887px"></div>
<div class="hl" style="left:6px;top:807px;width:887px"></div>
<div class="hl" style="left:6px;top:825px;width:887px"></div>
<div class="hl" style="left:6px;top:843px;width:887px"></div>
<div class="hl" style="left:6px;top:861px;width:887px"></div>
<div class="hl" style="left:6px;top:879px;width:887px"></div>
<div class="hl" style="left:6px;top:897px;width:887px"></div>
<div class="hl" style="left:6px;top:915px;width:887px"></div>
<div class="hl" style="left:6px;top:933px;width:887px"></div>
<div class="vl" style="left:263px;top:286px;height:651px"></div>
<div class="vl" style="left:329px;top:286px;height:651px"></div>
<div class="vl" style="left:399px;top:286px;height:651px"></div>
<div class="vl" style="left:523px;top:286px;height:651px"></div>
<div class="vl" style="left:575px;top:286px;height:651px"></div>
<div class="vl" style="left:619px;top:286px;height:651px"></div>
<div class="vl" style="left:698px;top:286px;height:651px"></div>
<div class="vl" style="left:770px;top:286px;height:651px"></div>
<div class="vl" style="left:823px;top:286px;height:651px"></div>
<div class="vl" style="left:892px;top:286px;height:651px"></div>
<div class="a" style="left:216px;top:229px;width:2px;height:708px;background:#000"></div>
<div class="a" style="left:18px;top:286px;width:875px;height:17px;border:1px dotted #007f7f"></div>
<svg class="a" style="left:10px;top:290px" width="6" height="9" viewBox="0 0 6 9"><path d="M0.5 0 L5.5 4.5 L0.5 9Z" fill="#000"/></svg>
<div class="a" style="left:6px;top:937px;width:887px;height:2px;background:#999"></div>
<div class="a" style="left:6px;top:939px;width:887px;height:22px;background:#efefef"></div>
<div class="a" style="left:17px;top:934px;width:1px;height:27px;background:#a0a0a0"></div>
<div class="a" style="left:5px;top:961px;width:1263px;height:1px;background:#7a8290"></div>
<div class="a" style="left:892px;top:939px;width:1px;height:22px;background:#a0a0a0"></div>
<div class="tc" style="left:219px;width:44px"><span>758,00</span></div>
<div class="tc" style="left:265px;width:64px"><span>0,00</span></div>
<div class="tc" style="left:331px;width:68px"><span>8,00</span></div>
<div class="tc" style="left:401px;width:122px"><span>0,00</span></div>
<div class="tc" style="left:525px;width:50px"><span>0,00</span></div>
<div class="tc" style="left:577px;width:42px"><span>1,00</span></div>
<div class="tc" style="left:621px;width:77px"><span>0,00</span></div>
<div class="tc" style="left:700px;width:70px"><span>0,00</span></div>
<div class="tc" style="left:772px;width:51px"><span>765,00</span></div>
<div class="tc" style="left:825px;width:67px"><span>$5.086.500</span></div>
<div class="a" style="left:216px;top:938px;width:2px;height:22px;background:#f0f0f0"></div>
<div class="a" style="left:771px;top:265px;width:55px;height:41px;border:3px solid #00ff00;border-radius:2.500px"></div>
<div class="a" style="left:1px;top:964px;width:1267px;height:1px;background:#d9d9d9"></div>
<div class="a grad" style="left:1px;top:966px;width:1267px;height:51px"></div>
<div class="a" style="left:526px;top:970px;width:90px;height:37px;background:linear-gradient(#ffffff 0%,#ffffff 48%,#ececec 62%,#d2d2d2 100%);border:1px solid #c6c6c6;border-top-color:#b9b9b9;border-bottom-color:#d8d8d8;border-radius:3px"></div>
<div class="g" style="left:567px;top:981px;font-size:11.5px;line-height:15px;letter-spacing:0.19px;color:#0a0a20">Imprimir</div>
<div class="a" style="left:783px;top:972px;width:90px;height:37px;background:linear-gradient(#ffffff 0%,#ffffff 48%,#ececec 62%,#d2d2d2 100%);border:1px solid #c6c6c6;border-top-color:#b9b9b9;border-bottom-color:#d8d8d8;border-radius:3px"></div>
<div class="g" style="left:825px;top:983px;font-size:11.5px;line-height:15px;letter-spacing:-0.16px;color:#0a0a20">Exportar</div>
<div class="a" style="left:1060px;top:972px;width:90px;height:37px;background:linear-gradient(#ffffff 0%,#ffffff 48%,#ececec 62%,#d2d2d2 100%);border:1px solid #c6c6c6;border-top-color:#b9b9b9;border-bottom-color:#d8d8d8;border-radius:3px"></div>
<div class="g" style="left:1107px;top:983px;font-size:11.5px;line-height:15px;letter-spacing:-0.28px;color:#0a0a20">Cerrar</div>
<svg class="a" style="left:520px;top:966px" width="640" height="46" viewBox="520 966 640 46">
<defs>
<linearGradient id="bPap" x1="0" y1="0" x2="1" y2="1"><stop offset="0" stop-color="#ffffff"/><stop offset=".6" stop-color="#fafafa"/><stop offset="1" stop-color="#d9d9d9"/></linearGradient>
<linearGradient id="bBlue" x1="0" y1="0" x2="0" y2="1"><stop offset="0" stop-color="#9fc0ef"/><stop offset=".55" stop-color="#4f86dd"/><stop offset="1" stop-color="#6fa0ea"/></linearGradient>
<linearGradient id="bBody" x1="0" y1="0" x2="0" y2="1"><stop offset="0" stop-color="#ffffff"/><stop offset="1" stop-color="#e6e6e6"/></linearGradient>
<linearGradient id="bRed" x1="0" y1="0" x2="1" y2="1"><stop offset="0" stop-color="#d8686c"/><stop offset=".35" stop-color="#d41219"/><stop offset=".75" stop-color="#e00a08"/><stop offset="1" stop-color="#f2452e"/></linearGradient>
<linearGradient id="bGloss" x1="0" y1="0" x2="0" y2="1"><stop offset="0" stop-color="#fff" stop-opacity=".45"/><stop offset="1" stop-color="#fff" stop-opacity=".05"/></linearGradient>
<linearGradient id="bGrn" x1="0" y1="0" x2="1" y2="1"><stop offset="0" stop-color="#7cc07a"/><stop offset="1" stop-color="#1f7a22"/></linearGradient>
<linearGradient id="bX" x1="0" y1="0" x2="0" y2="1"><stop offset="0" stop-color="#7fc878"/><stop offset="1" stop-color="#2a8a2c"/></linearGradient>
</defs>
<!-- printer -->
<path d="M538.200 977.500 h-.6 q-1 0 -1 1 v7 M558 977.500 h.3 q1 0 1 1 v7" fill="none" stroke="#c9c9c9" stroke-width=".8"/>
<path d="M536 984.800 q-4 .2 -4 4.200 v8.500 q0 2 2 2 h28 q2 0 2 -2 v-8.500 q0 -4 -4 -4.200z" fill="url(#bBody)" stroke="#b9b9b9" stroke-width=".9"/>
<rect x="539" y="972.800" width="18.500" height="12.500" fill="url(#bPap)" stroke="#c6c6c6" stroke-width=".7"/>
<rect x="539.800" y="983.400" width="16" height="8.800" rx="1.200" fill="url(#bBlue)"/>
<path d="M540 988.600 h15.600" stroke="#3f74cf" stroke-width=".8"/>
<rect x="538" y="995.300" width="19.600" height="3" rx="1.200" fill="#0c0c0c"/>
<path d="M538.500 998.200 h18.600 l1.300 4.300 h-21.200z" fill="#f4f4f4" stroke="#b5b5b5" stroke-width=".8"/>
<circle cx="560.800" cy="994.500" r=".7" fill="#d0d0d0"/>
<!-- excel -->
<rect x="789.500" y="975.500" width="30.500" height="30" fill="#dff0df" stroke="#2f7f33" stroke-width="1"/>
<rect x="790.800" y="976.800" width="28" height="27.500" fill="none" stroke="url(#bGrn)" stroke-width="2.200"/>
<rect x="792.500" y="978.500" width="24.500" height="24" fill="#f1f8f0"/>
<path d="M792.500 999 h24.500 v3.500 h-24.500z" fill="#d2e8d0"/>
<path d="M794 982 h6 l14.500 15 h-6z" fill="url(#bX)" stroke="#1f7a22" stroke-width=".7"/>
<path d="M808 982 h6 l-5.500 5.800 l-3 -3.100z M794 997 l6.600 -7 l3 3.100 l-3.600 3.900z" fill="#4aa548" stroke="#1f7a22" stroke-width=".7"/>
<path d="M795.500 982.600 h3.800 l13.600 14" stroke="#b7e2b0" stroke-width=".8" fill="none"/>
<path d="M807 990.500 h7.500 M805 997.300 h10" stroke="#1d6a20" stroke-width="1"/>
<!-- power -->
<rect x="1072.200" y="974.200" width="29" height="30.300" rx="4" fill="url(#bRed)" stroke="#a8181c" stroke-width=".6"/>
<path d="M1072.500 978 q0 -3.600 3.600 -3.600 h21.200 q3.600 0 3.600 3.600 v6 q-14 2 -28.400 8z" fill="url(#bGloss)"/>
<path d="M1081.600 983.600 a8.500 8.500 0 1 0 10.200 0" fill="none" stroke="#fff" stroke-width="3.200" stroke-linecap="round"/>
<path d="M1086.700 980.200 v8.200" stroke="#fff" stroke-width="3" stroke-linecap="round"/>
</svg>

<div class="a" style="left:0;top:1019px;width:1268px;height:1px;background:#dadada"></div>
<div class="a" style="left:0;top:1020px;width:1268px;height:1px;background:#f1eeea"></div>
<div class="a" style="left:0;top:1021px;width:1268px;height:1px;background:#2a86d8"></div>
<div class="a" style="left:0;top:1022px;width:1268px;height:12px;background:linear-gradient(#d6d6d6,#e2e2e2);overflow:hidden">
<div class="a" style="left:385px;top:0;width:1px;height:12px;background:#c0c0c0"></div>
<div class="a" style="left:386px;top:0;width:1px;height:12px;background:#f4f4f4"></div>
<div class="a" style="left:525px;top:0;width:1px;height:12px;background:#c0c0c0"></div>
<div class="a" style="left:526px;top:0;width:1px;height:12px;background:#f4f4f4"></div>
<div class="a" style="left:795px;top:0;width:1px;height:12px;background:#c0c0c0"></div>
<div class="a" style="left:796px;top:0;width:1px;height:12px;background:#f4f4f4"></div>
<div class="g" style="left:-3.900px;letter-spacing:-0.16px;font-size:12px;line-height:14px;top:-3px;transform-origin:0 50%">unto de Venta:</div>
<div class="g" style="left:71.300px;transform:scaleX(.878);font-size:12px;line-height:14px;top:-3px;transform-origin:0 50%">RESTAURANTE</div>
<div class="g" style="left:390.400px;transform:scaleX(.945);font-size:12px;line-height:14px;top:-3px;transform-origin:0 50%">18/09/2019</div>
<div class="g" style="left:452.300px;transform:scaleX(.916);font-size:12px;line-height:14px;top:-3px;transform-origin:0 50%">1:32:35 p.m.</div>
<div class="g" style="left:530.400px;letter-spacing:-0.06px;font-size:12px;line-height:14px;top:-3px;transform-origin:0 50%">Administrador:</div>
<div class="g" style="left:610.400px;transform:scaleX(.957);font-size:12px;line-height:14px;top:-3px;transform-origin:0 50%">ADMINISTRADOR</div>
<div class="g" style="left:800px;letter-spacing:-0.36px;font-size:12px;line-height:14px;top:-3px;transform-origin:0 50%">Versión:</div>
<div class="g" style="left:845.400px;transform:scaleX(.875);font-size:12px;line-height:14px;top:-3px;transform-origin:0 50%">7.0.1.7</div>
</div>
<div class="a" style="left:0;top:1034px;width:1268px;height:4px;background:#0f2a33"></div>
<div class="a" style="left:1016px;top:1034px;width:47px;height:4px;background:#42555b"></div>
</div></body></html>
